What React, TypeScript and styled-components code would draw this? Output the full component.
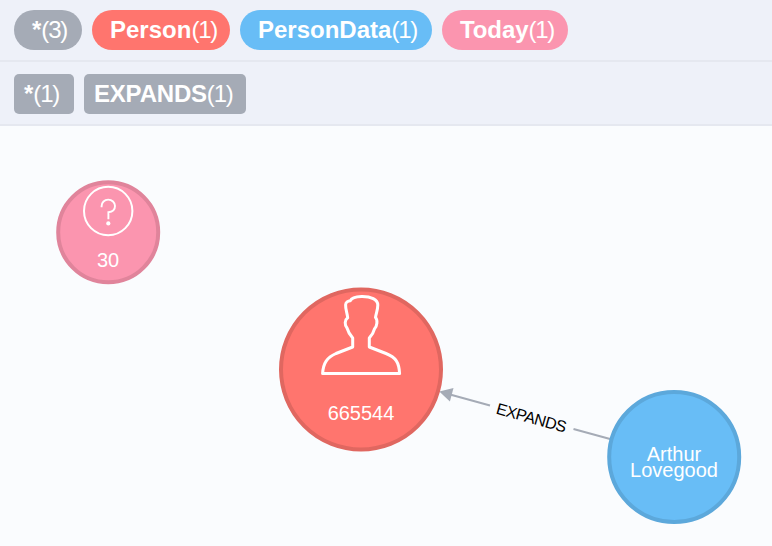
import React from 'react';
import styled, { createGlobalStyle } from 'styled-components';

const GlobalStyle = createGlobalStyle`
  body {
    margin: 0;
    background: #fafcfe;
    font-family: "Liberation Sans", Arial, sans-serif;
  }
`;

const Page = styled.main`
  display: flex;
  flex-direction: column;
  width: 772px;
  height: 546px;
  overflow: hidden;
  background: #fafcfe;
`;

const LegendRow = styled.div<{ $height: number; $top: number }>`
  display: flex;
  align-items: flex-start;
  gap: 10px;
  box-sizing: border-box;
  flex: none;
  height: ${(p) => p.$height}px;
  padding: ${(p) => p.$top}px 14px 0;
  background: #eef1f9;
  border-bottom: 2px solid #e5e8f0;
`;

const Token = styled.span<{ $color: string; $width: number; $pill?: boolean }>`
  box-sizing: border-box;
  width: ${(p) => p.$width}px;
  height: 40px;
  padding-left: ${(p) => (p.$pill ? 18 : 10)}px;
  border-radius: ${(p) => (p.$pill ? 20 : 5)}px;
  background: ${(p) => p.$color};
  color: #fff;
  font-size: 24px;
  line-height: 40px;
  white-space: nowrap;
`;

const Name = styled.b<{ $tracking: number }>`
  font-weight: 700;
  letter-spacing: ${(p) => p.$tracking}px;
`;

const Count = styled.span`
  letter-spacing: -1.2px;
`;

const Graph = styled.svg`
  display: block;
  flex: none;
  width: 772px;
  height: 420px;
`;

const Caption = styled.text`
  fill: #fff;
  font-size: 20px;
  text-anchor: middle;
`;

const EdgeLabel = styled.text`
  fill: #000;
  font-size: 16px;
  letter-spacing: -0.5px;
  text-anchor: middle;
`;

const labels = [
  { name: '*', count: 3, color: '#a5abb6', width: 68, tracking: 0 },
  { name: 'Person', count: 1, color: '#ff756e', width: 138, tracking: 0 },
  { name: 'PersonData', count: 1, color: '#68bdf6', width: 192, tracking: 0 },
  { name: 'Today', count: 1, color: '#fb95af', width: 126, tracking: -0.1 },
];

const relations = [
  { name: '*', count: 1, width: 60, tracking: 0 },
  { name: 'EXPANDS', count: 1, width: 162, tracking: -0.2 },
];

export default function App() {
  return (
    <Page>
      <GlobalStyle />
      <LegendRow $height={62} $top={10}>
        {labels.map((l) => (
          <Token key={l.name} $pill $color={l.color} $width={l.width}>
            <Name $tracking={l.tracking}>{l.name}</Name>
            <Count>({l.count})</Count>
          </Token>
        ))}
      </LegendRow>
      <LegendRow $height={64} $top={12}>
        {relations.map((r) => (
          <Token key={r.name} $color="#a5abb6" $width={r.width}>
            <Name $tracking={r.tracking}>{r.name}</Name>
            <Count>({r.count})</Count>
          </Token>
        ))}
      </LegendRow>
      <Graph viewBox="0 126 772 420">
        <g stroke="#a5abb6" strokeWidth="2">
          <path d="M611 439.3L573.5 429M490 405.5L450 394.5" />
          <path d="M439.3 391.4L453.5 388L449.9 401.6Z" fill="#a5abb6" stroke="none" />
        </g>
        <EdgeLabel transform="translate(529.8 423) rotate(15.5)">EXPANDS</EdgeLabel>

        <circle cx="108.2" cy="232.3" r="50" fill="#fb95af" stroke="#e0849b" strokeWidth="4" />
        <g fill="none" stroke="#fff">
          <circle cx="108.2" cy="211" r="24.2" strokeWidth="2" />
          <path
            d="M101.6 207.2V206.2C101.6 202.4 104.5 199.6 108.2 199.6C112 199.6 115 202.4 115 206C115 209.6 112.2 211.8 108.4 212.2V219.2"
            strokeWidth="1.9"
          />
          <circle cx="108.3" cy="223.4" r="2.1" fill="#fff" stroke="none" />
        </g>
        <Caption x="108" y="267">30</Caption>

        <circle cx="361" cy="369.5" r="80" fill="#ff756e" stroke="#e06760" strokeWidth="4" />
        <path
          d="M361.5 296.4C371 296.2 377.8 299.5 377.8 305C377.8 310 376 313.5 375.5 317.5C378 320 377 326.5 374.5 328.8C373.5 333 371.5 335.5 369.3 338V347L386 353.5C396 357.5 399 362.5 399.6 373.5H322.6C323.2 363 327 357.5 336 353.5L352.7 347V338C350 335 348 331.5 347 328C344.5 325 344.5 320 347.7 317.8C347.2 313 345.4 309 345.6 304.8C345.7 302.5 348 301 350.3 300.8C351.5 297.7 356 296.5 361.5 296.4Z"
          fill="none"
          stroke="#fff"
          strokeWidth="3"
          strokeLinejoin="round"
        />
        <Caption x="361" y="420">665544</Caption>

        <circle cx="674.2" cy="457" r="65" fill="#68bdf6" stroke="#5ca8db" strokeWidth="4" />
        <Caption x="674" y="461">Arthur</Caption>
        <Caption x="674" y="477">Lovegood</Caption>
      </Graph>
    </Page>
  );
}
